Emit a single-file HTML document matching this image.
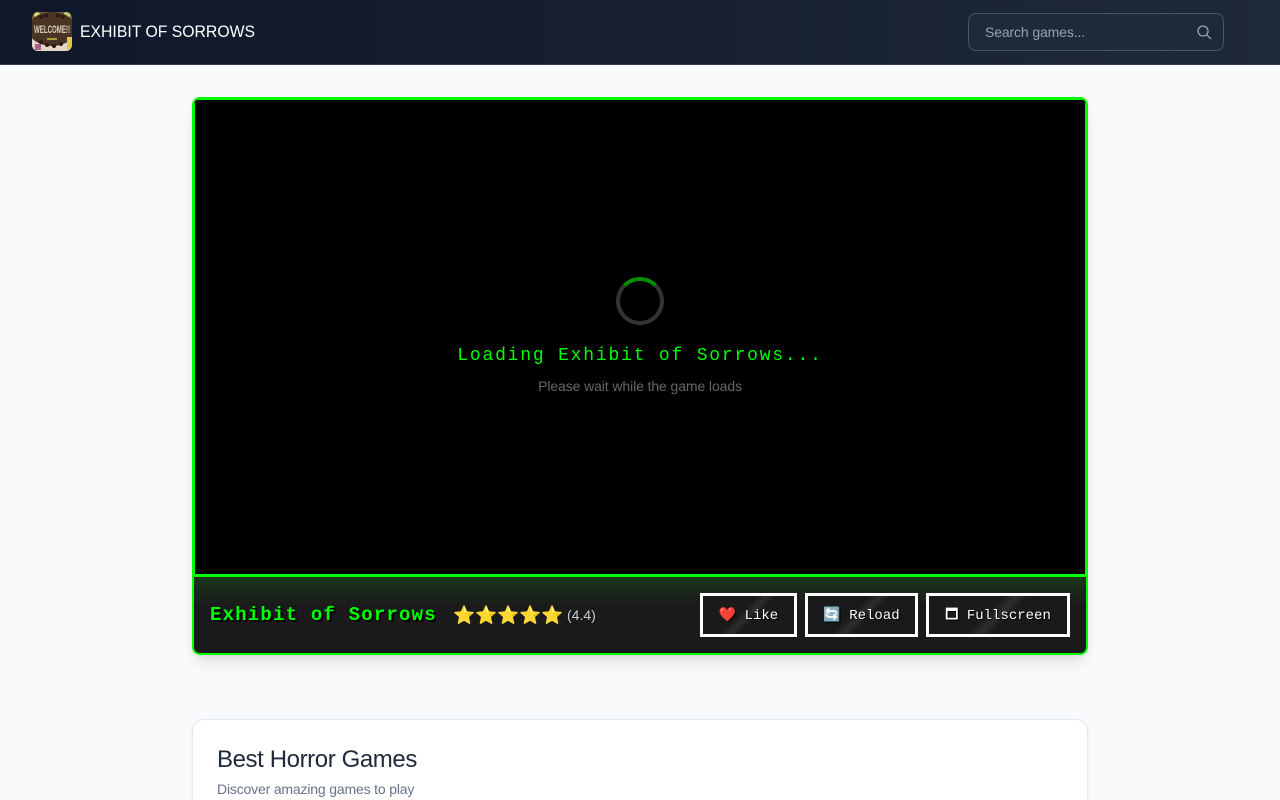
<!DOCTYPE html>
<html lang="en">
<head>
<meta charset="utf-8">
<title>Exhibit of Sorrows</title>
<style>
*{box-sizing:border-box;margin:0;padding:0}
html,body{width:1280px;height:800px;overflow:hidden;background:#f8fafc}
#root{position:relative;width:1280px;height:800px;overflow:hidden;background:#f8fafc;font-family:"Liberation Sans",sans-serif}
.hdr{position:absolute;left:0;top:0;width:1280px;height:65px;background:linear-gradient(90deg,#0f172a,#1e293b);border-bottom:1px solid #334155}
.logo{position:absolute;left:32px;top:12px;width:40px;height:39px;border-radius:6px;overflow:hidden}
.logo svg{display:block;filter:blur(.35px)}
.brand{position:absolute;left:80px;top:20px;font-size:16.8px;line-height:24px;color:#fff;white-space:nowrap;transform-origin:0 50%;transform:scaleX(.94)}
.search{position:absolute;left:968px;top:13px;width:256px;height:38px;border:1px solid #475569;border-radius:8px;background:#1e293b}
.search span{position:absolute;left:16px;top:8px;font-size:14px;line-height:20px;letter-spacing:-.13px;color:#94a3b8}
.search svg{position:absolute;left:227px;top:10px}
.game{position:absolute;left:192px;top:97px;width:896px;height:558px;border:2px solid #0f0;border-radius:8px;background:#1a1a1a;box-shadow:0 10px 15px -3px rgba(0,0,0,.1),0 4px 6px -2px rgba(0,0,0,.05);overflow:hidden}
.stage{position:absolute;left:0;top:0;width:892px;height:478px;background:#000;border:1px solid #0f0;border-bottom:3px solid #0f0}
.spin{position:absolute;left:421px;top:177px;width:48px;height:48px;border-radius:50%;border:4px solid #333;border-top-color:#008f00}
.load{position:absolute;left:0;top:245px;width:890px;text-align:center;font:18px/22px "Liberation Mono",monospace;letter-spacing:1.8px;color:#0f0}
.wait{position:absolute;left:0;top:276px;width:890px;text-align:center;font-size:14px;line-height:20px;letter-spacing:-.1px;color:#666}
.bar{position:absolute;left:0;top:478px;width:892px;height:78px;background:linear-gradient(180deg,#1a3a1a 0,#1a2a1a 12px,#1a1a1a 30px,#1a1a1a 100%)}
.title{position:absolute;left:16px;top:27px;font:bold 19px/22px "Liberation Mono",monospace;letter-spacing:1.2px;color:#0f0;text-shadow:2px 2px 0 #000;white-space:nowrap}
.stars{position:absolute;left:259px;top:27px;font-size:17.7px;line-height:24px;letter-spacing:0;white-space:nowrap;font-family:"Noto Color Emoji",sans-serif}
.rate{position:absolute;left:373px;top:29px;font-size:14px;line-height:18px;color:#ccc}
.btn{position:absolute;top:16px;height:44px;border:3px solid #fff;background:linear-gradient(135deg,#1a1a1a 0,#1a1a1a 43%,#2e2e2e 50%,#1a1a1a 57%,#1a1a1a 100%);color:#fff;font:14px/40px "Liberation Mono",monospace;text-align:center;white-space:nowrap;text-shadow:1px 1px 0 #000}
.card{position:absolute;left:192px;top:719px;width:896px;height:81px;background:#fff;border:1px solid #e2e8f0;border-bottom:0;border-radius:12px 12px 0 0;box-shadow:0 1px 3px rgba(0,0,0,.06)}
.card h2{position:absolute;left:24px;top:24px;font-size:24px;line-height:32px;font-weight:400;letter-spacing:-.4px;color:#1e293b;white-space:nowrap}
.card p{position:absolute;left:24px;top:59px;font-size:14px;line-height:20px;letter-spacing:-.17px;color:#64748b;white-space:nowrap}
</style>
</head>
<body>
<div id="root">
<div class="hdr">
  <div class="logo">
    <svg width="40" height="39" viewBox="0 0 40 39">
      <rect width="40" height="39" fill="#e4d6c8"/>
      <rect x="0" y="0" width="40" height="10" fill="#6a6232"/>
      <circle cx="5" cy="3" r="3" fill="#dcd870"/>
      <circle cx="20" cy="3" r="2.5" fill="#d8b848"/>
      <circle cx="35" cy="3" r="3.5" fill="#b8cc70"/>
      <ellipse cx="20" cy="17" rx="24" ry="17" fill="#4a3524"/>
      <circle cx="9" cy="5" r="2" fill="#2c1c10"/>
      <circle cx="14" cy="3.5" r="2" fill="#2c1c10"/>
      <circle cx="26" cy="3.5" r="2" fill="#2c1c10"/>
      <circle cx="31" cy="5" r="2" fill="#2c1c10"/>
      <circle cx="9" cy="30" r="2" fill="#2c1c10"/>
      <circle cx="15" cy="33" r="2" fill="#2c1c10"/>
      <circle cx="22" cy="34" r="2" fill="#2c1c10"/>
      <circle cx="29" cy="32" r="2" fill="#2c1c10"/>
      <rect x="3" y="32" width="6" height="6" fill="#a8608a"/>
      <rect x="35" y="25" width="5" height="12" fill="#e2c84a"/>
      <text x="20" y="21" text-anchor="middle" font-family="Liberation Sans,sans-serif" font-size="11" font-weight="bold" fill="#d8d0b8" textLength="36" lengthAdjust="spacingAndGlyphs">WELCOME!!</text>
      <rect x="15" y="26" width="10" height="2" fill="#a89a3a"/>
    </svg>
  </div>
  <div class="brand">EXHIBIT OF SORROWS</div>
  <div class="search">
    <span>Search games...</span>
    <svg width="16" height="16" viewBox="0 0 24 24" fill="none" stroke="#94a3b8" stroke-width="2" stroke-linecap="round"><circle cx="10.5" cy="10.5" r="7.5"/><path d="M16 16l6 6"/></svg>
  </div>
</div>
<div class="game">
  <div class="stage">
    <div class="spin"></div>
    <div class="load">Loading Exhibit of Sorrows...</div>
    <div class="wait">Please wait while the game loads</div>
  </div>
  <div class="bar">
    <div class="title">Exhibit of Sorrows</div>
    <div class="stars">⭐⭐⭐⭐⭐</div>
    <div class="rate">(4.4)</div>
    <div class="btn" style="left:506px;width:97px">❤️ Like</div>
    <div class="btn" style="left:611px;width:113px">🔄 Reload</div>
    <div class="btn" style="left:732px;width:144px">🗖 Fullscreen</div>
  </div>
</div>
<div class="card">
  <h2>Best Horror Games</h2>
  <p>Discover amazing games to play</p>
</div>
</div>
</body>
</html>
